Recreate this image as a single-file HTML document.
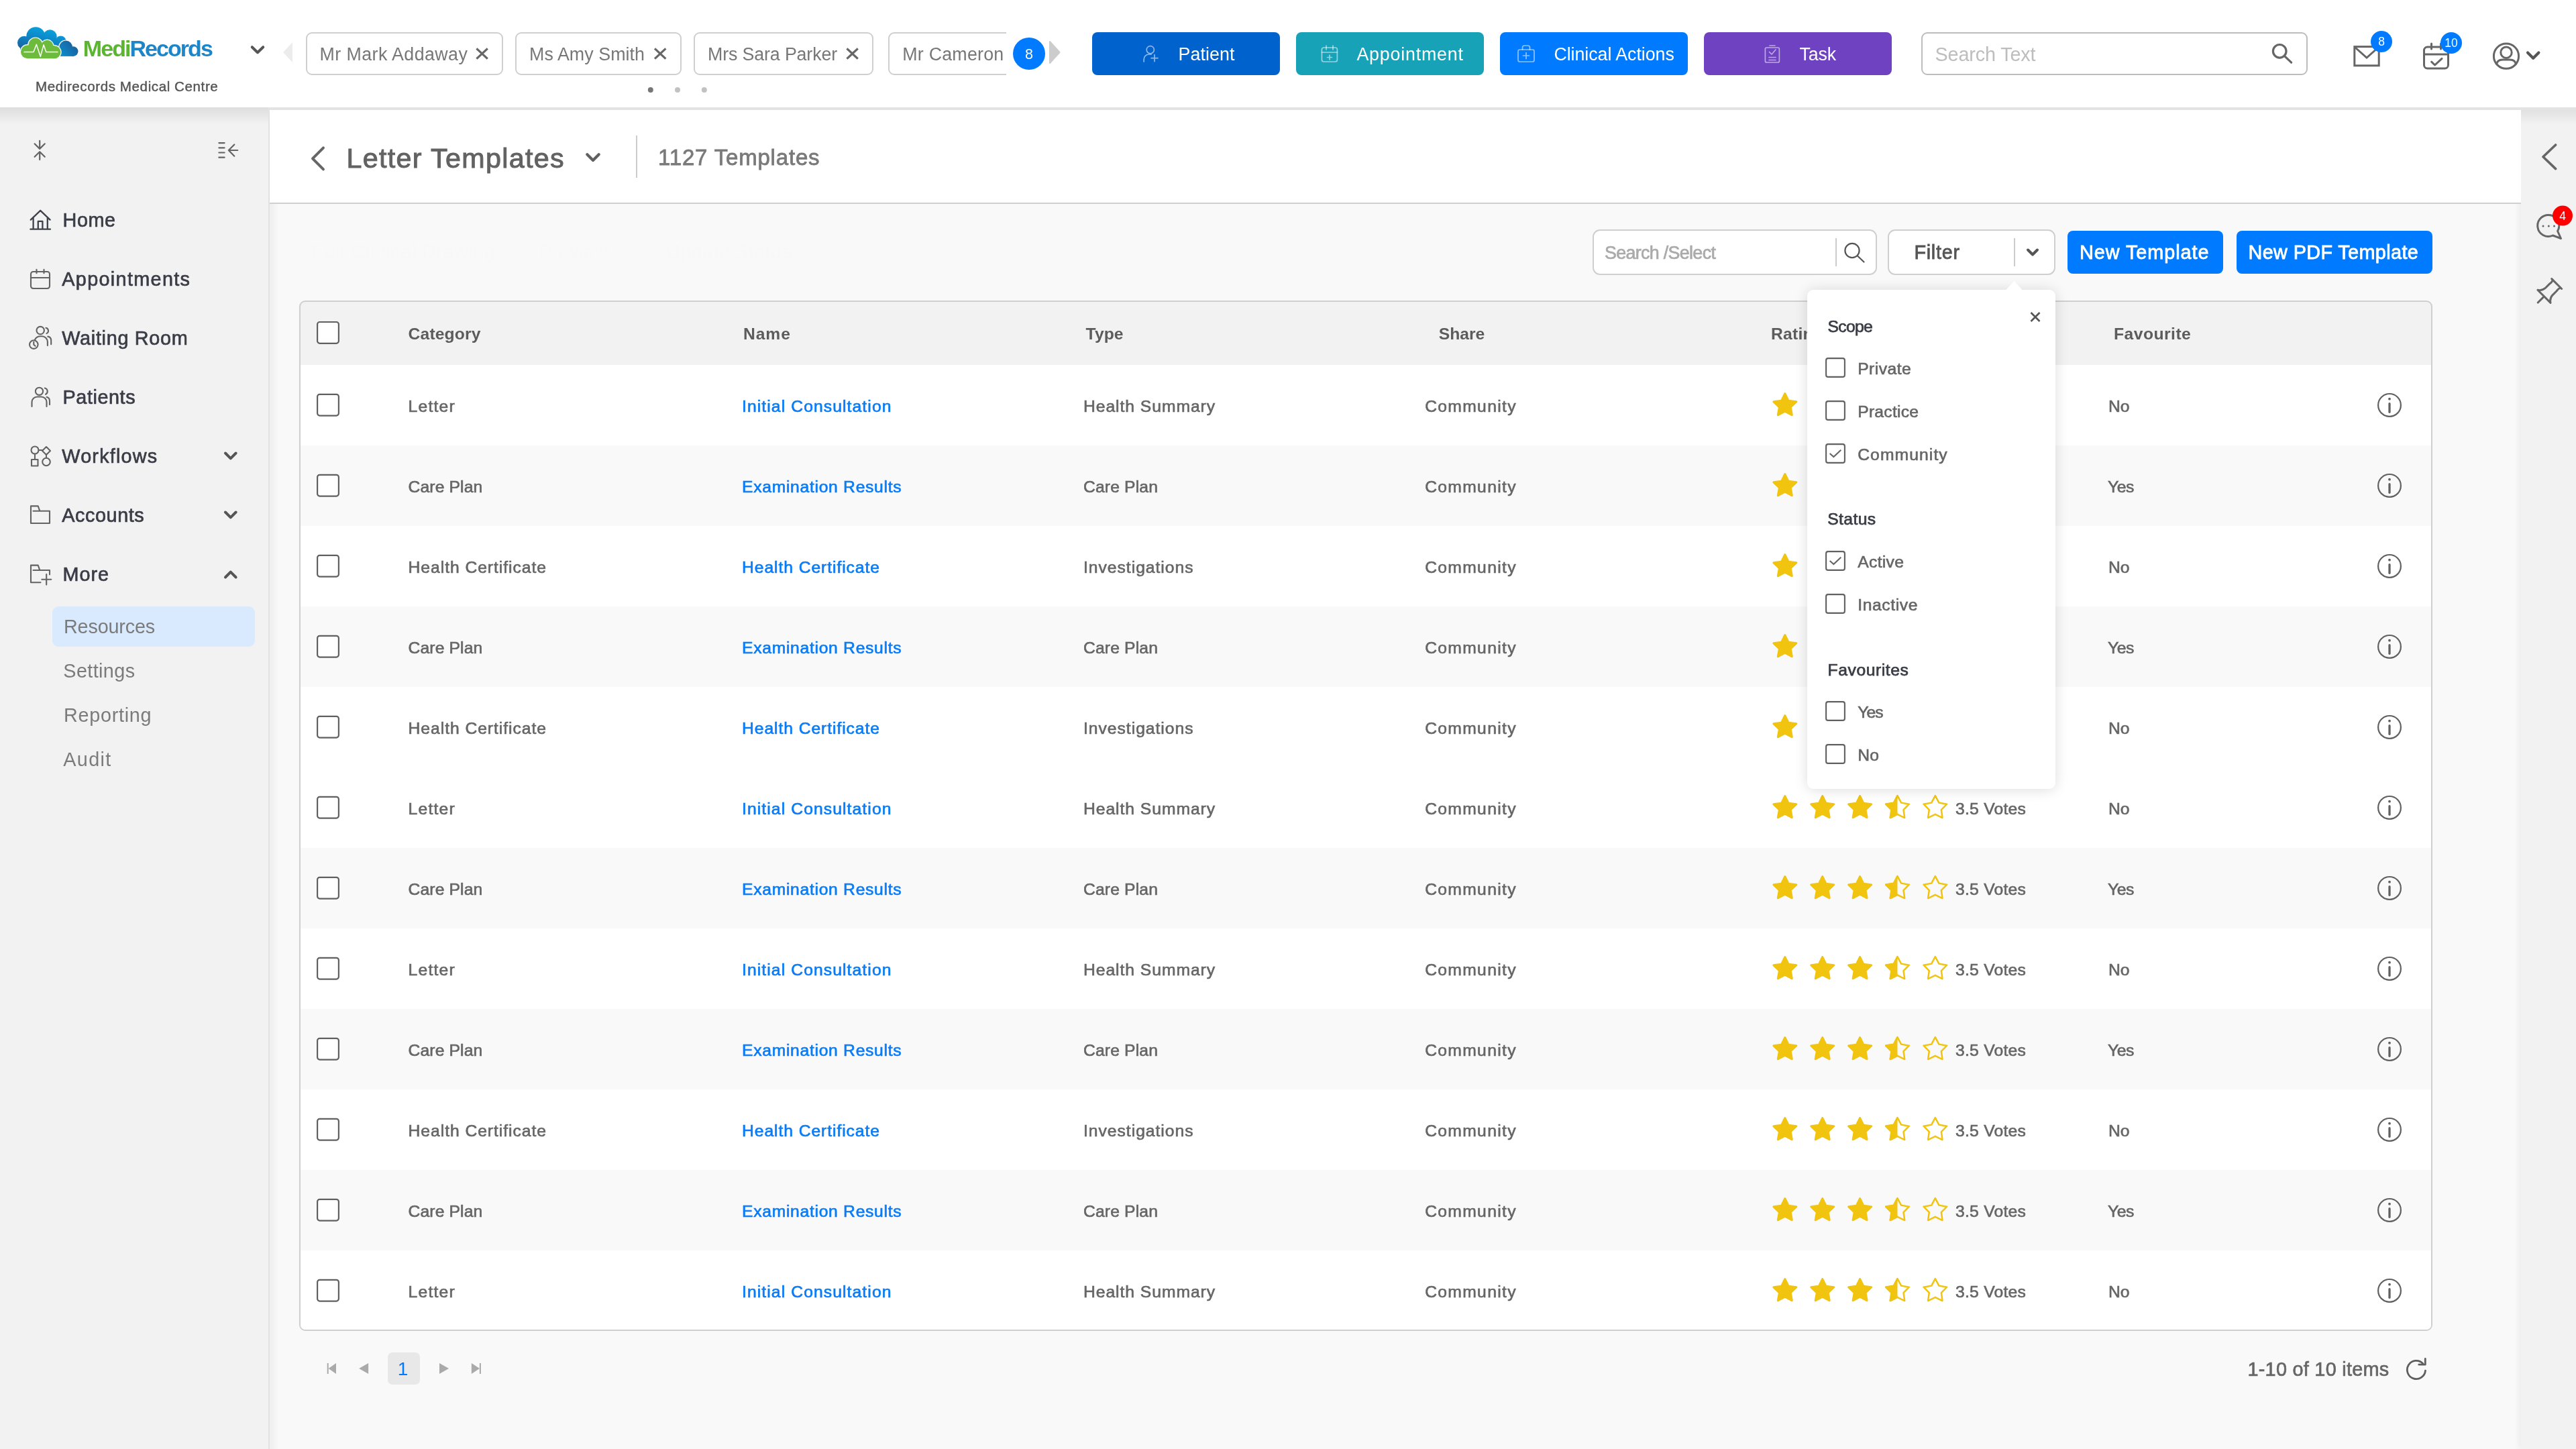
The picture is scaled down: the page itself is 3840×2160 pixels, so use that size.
<!DOCTYPE html><html lang="en"><head><meta charset="utf-8"><title>Letter Templates</title><style>
html,body{margin:0;padding:0}
body{width:3840px;height:2160px;position:relative;overflow:hidden;background:#f9f9f9;font-family:"Liberation Sans",sans-serif}
.a{position:absolute}
.t{position:absolute;white-space:nowrap;line-height:1}
svg.l{position:absolute;left:0;top:0;overflow:visible}
.tl{position:absolute;left:0;top:0;width:3840px;height:2160px;will-change:transform}
.tab{position:absolute;top:48px;height:60px;border:2px solid #cfcfcf;border-radius:9px;background:#fff}
.btn{position:absolute;top:48px;height:64px;width:280px;border-radius:8px}
.row{position:absolute;left:0;width:3176px;height:120px}
</style></head><body>
<div class="a" style="left:0;top:160px;width:400px;height:2000px;background:#f2f2f2"></div>
<div class="a" style="left:400px;top:160px;width:2px;height:2000px;background:#e2e2e2"></div>
<div class="a" style="left:402px;top:160px;width:14px;height:2000px;background:linear-gradient(90deg,rgba(0,0,0,0.045),rgba(0,0,0,0))"></div>
<div class="a" style="left:78px;top:904px;width:302px;height:60px;border-radius:9px;background:#d9eaff"></div>
<div class="a" style="left:3758px;top:160px;width:82px;height:2000px;background:#f2f2f2;box-shadow:-3px 0 8px rgba(0,0,0,0.06)"></div>
<div class="a" style="left:402px;top:164px;width:3356px;height:138px;background:#fff;border-bottom:2px solid #d0d0d0"></div>
<div class="a" style="left:948px;top:202px;width:2px;height:63px;background:#ccc"></div>
<div class="a" style="left:0;top:0;width:3840px;height:160px;background:#fff;box-shadow:0 0 0 0 #000"></div>
<div class="a" style="left:0;top:160px;width:400px;height:26px;background:linear-gradient(180deg,rgba(0,0,0,0.085),rgba(0,0,0,0))"></div>
<div class="a" style="left:400px;top:160px;width:3440px;height:4px;background:#e3e3e3"></div>
<div class="a" style="left:3758px;top:164px;width:82px;height:22px;background:linear-gradient(180deg,rgba(0,0,0,0.07),rgba(0,0,0,0))"></div>
<div class="tab" style="left:456px;width:290px"></div>
<div class="tab" style="left:768px;width:244px"></div>
<div class="tab" style="left:1034px;width:264px"></div>
<div class="a" style="left:1324px;top:48px;width:176px;height:64px;overflow:hidden"><div class="tab" style="left:0;top:0;width:300px"></div></div>
<div class="btn" style="left:1628px;background:#0062cc"></div>
<div class="btn" style="left:1932px;background:#17a2b8"></div>
<div class="btn" style="left:2236px;background:#007bff"></div>
<div class="btn" style="left:2540px;background:#6f42c1"></div>
<div class="a" style="left:2864px;top:48px;width:572px;height:60px;border:2px solid #bdbdbd;border-radius:9px;background:#fff"></div>
<div class="a" style="left:2374px;top:342px;width:420px;height:64px;border:2px solid #cfcfcf;border-radius:11px;background:#fff"></div>
<div class="a" style="left:2736px;top:355px;width:2px;height:42px;background:#ccc"></div>
<div class="a" style="left:2814px;top:342px;width:246px;height:64px;border:2px solid #cfcfcf;border-radius:11px;background:#fff"></div>
<div class="a" style="left:3002px;top:355px;width:2px;height:42px;background:#ccc"></div>
<div class="a" style="left:3082px;top:344px;width:232px;height:64px;border-radius:8px;background:#007bff"></div>
<div class="a" style="left:3334px;top:344px;width:292px;height:64px;border-radius:8px;background:#007bff"></div>
<div class="a" style="left:446px;top:448px;width:3176px;height:1532px;border:2px solid #cfcfcf;border-radius:9px;background:#f2f2f2;overflow:hidden"><div class="row" style="top:94px;background:#fff"></div><div class="row" style="top:214px;background:#f9f9f9"></div><div class="row" style="top:334px;background:#fff"></div><div class="row" style="top:454px;background:#f9f9f9"></div><div class="row" style="top:574px;background:#fff"></div><div class="row" style="top:694px;background:#fff"></div><div class="row" style="top:814px;background:#f9f9f9"></div><div class="row" style="top:934px;background:#fff"></div><div class="row" style="top:1054px;background:#f9f9f9"></div><div class="row" style="top:1174px;background:#fff"></div><div class="row" style="top:1294px;background:#f9f9f9"></div><div class="row" style="top:1414px;background:#fff"></div></div>
<div class="a" style="left:578px;top:2016px;width:48px;height:48px;border-radius:7px;background:#e9e8e8"></div>
<svg class="l" width="3840" height="2160" viewBox="0 0 3840 2160"><defs><linearGradient id="lg1" gradientUnits="userSpaceOnUse" x1="56" y1="40" x2="46" y2="80"><stop offset="0" stop-color="#07a0de"/><stop offset="1" stop-color="#1a5d9c"/></linearGradient>
<linearGradient id="lg2" gradientUnits="userSpaceOnUse" x1="88" y1="84" x2="112" y2="62"><stop offset="0" stop-color="#0a93d2"/><stop offset="1" stop-color="#1c5a97"/></linearGradient></defs><g fill="url(#lg1)"><circle cx="36" cy="63.700" r="10"/><circle cx="53.300" cy="54.200" r="14"/><circle cx="74.500" cy="54.500" r="10.200"/><circle cx="90.500" cy="61.500" r="8"/><rect x="30" y="58" width="66" height="20"/></g><g fill="#fff" stroke="#fff" stroke-width="2.400"><circle cx="98.200" cy="70.400" r="9.800"/><circle cx="109.200" cy="76.600" r="7.300"/><rect x="86" y="72" width="23.500" height="11.900"/><circle cx="89" cy="77" r="6.900"/></g><g fill="url(#lg2)"><circle cx="98.200" cy="70.400" r="9.800"/><circle cx="109.200" cy="76.600" r="7.300"/><rect x="86" y="72" width="23.500" height="11.900"/><circle cx="89" cy="77" r="6.900"/></g><g fill="#fff" stroke="#fff" stroke-width="2.400"><circle cx="41" cy="77.200" r="10"/><circle cx="52.800" cy="67" r="10.400"/><circle cx="70.300" cy="69" r="9.200"/><circle cx="81" cy="77.700" r="9.500"/><rect x="41" y="68" width="40" height="19.200"/></g><g fill="#6cbb3c"><circle cx="41" cy="77.200" r="10"/><circle cx="52.800" cy="67" r="10.400"/><circle cx="70.300" cy="69" r="9.200"/><circle cx="81" cy="77.700" r="9.500"/><rect x="41" y="68" width="40" height="19.200"/></g><polyline points="35.500,77.500 50,77.500 54.300,66.300 60.300,84.200 65.100,66.800 68.700,77.500 86.500,77.500" fill="none" stroke="#fff" stroke-width="1.500" stroke-linejoin="round"/><polyline points="375.8,70.2 384,78.2 392.2,70.2" fill="none" stroke="#555" stroke-width="4" stroke-linecap="round" stroke-linejoin="round"/><polygon points="436,63 436,93 422,78" fill="#ececec"/><polygon points="1565,62 1565,94 1579.5,78" fill="#ccc" stroke="#ccc" stroke-width="2" stroke-linejoin="round"/><path d="M710.4,72.4 l16.4,15.2 M726.8,72.4 l-16.4,15.2" stroke="#666" stroke-width="3.2" fill="none"/><path d="M976,72.4 l16.4,15.2 M992.4,72.4 l-16.4,15.2" stroke="#666" stroke-width="3.2" fill="none"/><path d="M1262.4,72.4 l16.4,15.2 M1278.8000000000002,72.4 l-16.4,15.2" stroke="#666" stroke-width="3.2" fill="none"/><circle cx="969.8" cy="134" r="4" fill="#777"/><circle cx="1010" cy="134" r="4" fill="#c2c2c2"/><circle cx="1049.8" cy="134" r="4" fill="#c2c2c2"/><circle cx="1534" cy="80" r="24" fill="#007bff"/><g fill="none" stroke="#fff" stroke-opacity="0.55" stroke-width="1.700" stroke-linecap="round" stroke-linejoin="round"><circle cx="1714.8" cy="74.2" r="5.6"/><path d="M1705.2,92 v-3.5 a7.5,7.5 0 0 1 7.5,-7.5 h3.5"/><path d="M1716,86.6 h10 M1721,81.6 v10"/></g><g fill="none" stroke="#fff" stroke-opacity="0.55" stroke-width="1.700" stroke-linecap="round" stroke-linejoin="round"><rect x="1970.4" y="71" width="23" height="21" rx="3"/><path d="M1977,68 v6 M1987,68 v6 M1970.4,78 h23 M1978.5,85.5 h7 M1982,82 v7"/></g><g fill="none" stroke="#fff" stroke-opacity="0.55" stroke-width="1.700" stroke-linecap="round" stroke-linejoin="round"><rect x="2263" y="74" width="24" height="18" rx="2.5"/><path d="M2269.5,74 v-3 a3,3 0 0 1 3,-3 h5 a3,3 0 0 1 3,3 v3 M2270.5,83 h9 M2275,78.5 v9"/></g><g fill="none" stroke="#fff" stroke-opacity="0.55" stroke-width="1.700" stroke-linecap="round" stroke-linejoin="round"><rect x="2631.4" y="71" width="21" height="22" rx="2"/><path d="M2638,68 h8 M2637.5,77.5 l3.5,3.5 l6,-7 M2637,85.5 h10 M2637,89.5 h10"/></g><g fill="none" stroke="#666" stroke-width="3.2" stroke-linecap="round"><circle cx="3398.2" cy="76.3" r="9.8"/><path d="M3405.6,83.6 L3415.6,93.2"/></g><g fill="none" stroke="#666" stroke-width="3"><rect x="3509.8" y="69.6" width="36.4" height="28.2"/><path d="M3510.5,70.5 L3528,86 L3545.5,70.5"/></g><circle cx="3550" cy="62" r="16" fill="#007bff"/><g fill="none" stroke="#666" stroke-width="3" stroke-linecap="round" stroke-linejoin="round"><rect x="3613.5" y="70" width="36" height="32" rx="5"/><path d="M3624.5,65 v8 M3638.5,65 v8 M3613.5,81 h36 M3624.6,92.2 l5,4.8 l10.4,-9.6"/></g><circle cx="3654" cy="64" r="16" fill="#007bff"/><g fill="none" stroke="#666" stroke-width="3"><circle cx="3736" cy="83.7" r="18.6"/><circle cx="3736" cy="78.2" r="8.2"/><path d="M3721.5,96.5 c0.5,-5 4,-7.5 9,-7.5 h11 c5,0 8.500,2.500 9,7.5"/></g><polyline points="3768,78.6 3776.2,86.8 3784.4,78.6" fill="none" stroke="#555" stroke-width="4.2" stroke-linecap="round" stroke-linejoin="round"/><polyline points="3809.600,216 3791,233.700 3809.600,251.600" fill="none" stroke="#666" stroke-width="3.600" stroke-linecap="round" stroke-linejoin="round"/><path d="M3812.600,344.500 L3817.500,355.500 L3805.500,351 A16,16 0 1 1 3812.600,344.500 Z" fill="none" stroke="#666" stroke-width="3" stroke-linejoin="round"/><g fill="#666"><circle cx="3791" cy="337" r="1.500"/><circle cx="3799.300" cy="337" r="1.500"/><circle cx="3807.500" cy="337" r="1.500"/></g><circle cx="3820" cy="321.600" r="15" fill="#f00"/><g transform="translate(3801.650,432.650) rotate(45)" fill="none" stroke="#666" stroke-width="3" stroke-linejoin="round" stroke-linecap="round"><path d="M-10.500,-13.500 H10.500 M-8,-13 Q-6.500,-10 -7.500,-6 V3 Q-8,9.500 -13.500,13 H13.500 Q8,9.500 7.500,3 V-6 Q6.500,-10 8,-13 M0,13 V26"/></g><g fill="none" stroke="#636363" stroke-width="2.2" stroke-linecap="round" stroke-linejoin="round"><path d="M59.200,209.800 V221.500 M51.600,214.300 L59.200,221.900 L66.800,214.300 M59.200,238.100 V226.500 M51.600,233.800 L59.200,226.200 L66.800,233.800"/></g><g fill="none" stroke="#636363" stroke-width="2.2" stroke-linecap="round" stroke-linejoin="round"><path d="M326.400,213.100 h8.200 M326.400,220.300 h8.200 M326.400,227.500 h8.200 M326.400,234.700 h8.200 M341.200,224 H354.200 M349.300,215.500 L340.800,224 L349.300,232.700"/></g><g fill="none" stroke="#3f414a" stroke-width="2.300" stroke-linecap="round" stroke-linejoin="round"><path d="M45.800,327.600 L60.200,313.800 L74.600,327.600 M49.600,324.500 v17 M70.800,324.500 v17 M45.400,341.700 h29.600 M56.800,341.500 v-11.600 h6.600 v11.600"/></g><g fill="none" stroke="#636363" stroke-width="2.100" stroke-linecap="round" stroke-linejoin="round"><rect x="46" y="405" width="28" height="25" rx="3.500"/><path d="M54.500,401.800 v5.500 M65.500,401.800 v5.500 M46,414 h28"/></g><g fill="none" stroke="#636363" stroke-width="2.100" stroke-linecap="round" stroke-linejoin="round"><circle cx="60.200" cy="492.600" r="5.700"/><path d="M68.500,488.800 a4.400,4.400 0 0 1 1,8.300 M52,506.500 C53.500,503 56.500,501.200 60.500,501.200 h2 a8.400,8.400 0 0 1 8.400,8.400 v5.500 M71.300,501.600 a6,6 0 0 1 4.900,5.900 v5.800"/><circle cx="50.300" cy="513.600" r="6.300" fill="#f2f2f2"/><path d="M50.300,509.800 v4 l2.300,2"/></g><g fill="none" stroke="#636363" stroke-width="2.100" stroke-linecap="round" stroke-linejoin="round"><circle cx="58.500" cy="583.300" r="5.600"/><path d="M66.800,578.500 a5,5 0 0 1 1.300,9.300 M47.500,606 v-6.500 a8,8 0 0 1 8,-8 h6 a8,8 0 0 1 8,8 v6.500 M69.500,591.800 a6,6 0 0 1 4.500,6 v5.500"/></g><g fill="none" stroke="#636363" stroke-width="2.100" stroke-linecap="round" stroke-linejoin="round"><circle cx="52" cy="671" r="5.500"/><rect x="47" y="685" width="9.500" height="9.500"/><circle cx="69" cy="688.500" r="5.800"/><path d="M69,666 l6,6 l-6,6 l-6,-6 z M57.500,671 h5.500 M52,676.500 v8.500 M69,678 v4.700"/></g><g fill="none" stroke="#636363" stroke-width="2.100" stroke-linecap="round" stroke-linejoin="round"><path d="M46,780 v-25.600 h10.700 l2.600,7.200 M49.500,761.800 h24.500 v18.200 h-28"/></g><g fill="none" stroke="#636363" stroke-width="2.100" stroke-linecap="round" stroke-linejoin="round"><path d="M46,868.200 v-25.600 h10.700 l2.600,7.200 M49.500,850 h24.500 v6.500 M46,868.200 h14.500 M69.200,856 v15.600 M62.300,863.700 h14"/></g><polyline points="336,675.500 343.800,683.300 351.600,675.500" fill="none" stroke="#555" stroke-width="4" stroke-linecap="round" stroke-linejoin="round"/><polyline points="336,763.500 343.800,771.300 351.600,763.500" fill="none" stroke="#555" stroke-width="4" stroke-linecap="round" stroke-linejoin="round"/><polyline points="336,860.500 343.800,852.700 351.600,860.500" fill="none" stroke="#555" stroke-width="4" stroke-linecap="round" stroke-linejoin="round"/><polyline points="482,220.300 466,236.300 482,252.300" fill="none" stroke="#666" stroke-width="4" stroke-linecap="round" stroke-linejoin="round"/><polyline points="875.300,230.300 884,239 892.700,230.300" fill="none" stroke="#606060" stroke-width="4.200" stroke-linecap="round" stroke-linejoin="round"/><g fill="none" stroke="#555" stroke-width="2.200" stroke-linecap="round"><circle cx="2761" cy="373.500" r="10.600"/><path d="M2769,381.500 L2778.500,390.500"/></g><polyline points="3023,372.500 3030,379.500 3037,372.500" fill="none" stroke="#555" stroke-width="4" stroke-linecap="round" stroke-linejoin="round"/><rect x="473.1" y="480" width="31.8" height="31.8" rx="3.5" fill="#fff" stroke="#606060" stroke-width="2.2"/><defs><path id="st" d="M0.00,-17.70 L5.11,-7.04 L16.83,-5.47 L8.27,2.69 L10.40,14.32 L0.00,8.70 L-10.40,14.32 L-8.27,2.69 L-16.83,-5.47 L-5.11,-7.04 Z"/><path id="so" d="M0.00,-18.20 L5.58,-7.69 L17.31,-5.62 L9.04,2.94 L10.70,14.72 L0.00,9.50 L-10.70,14.72 L-9.04,2.94 L-17.31,-5.62 L-5.58,-7.69 Z"/><clipPath id="half"><rect x="-20" y="-20" width="20" height="40"/></clipPath></defs><rect x="473.1" y="587.8" width="31.8" height="31.8" rx="3.5" fill="#fff" stroke="#606060" stroke-width="2.2"/><use href="#st" x="2660.8" y="604.3" fill="#f1c40f" stroke="#f1c40f" stroke-width="3.200" stroke-linejoin="round"/><use href="#st" x="2716.7" y="604.3" fill="#f1c40f" stroke="#f1c40f" stroke-width="3.200" stroke-linejoin="round"/><use href="#st" x="2772.6" y="604.3" fill="#f1c40f" stroke="#f1c40f" stroke-width="3.200" stroke-linejoin="round"/><g transform="translate(2828.5,604.3)"><use href="#so" fill="none" stroke="#f1c40f" stroke-width="2.500" stroke-linejoin="round"/><g clip-path="url(#half)"><use href="#st" fill="#f1c40f" stroke="#f1c40f" stroke-width="3.200" stroke-linejoin="round"/></g></g><use href="#so" x="2884.8" y="604.3" fill="none" stroke="#f1c40f" stroke-width="2.500" stroke-linejoin="round"/><circle cx="3562" cy="603.9" r="16.900" fill="none" stroke="#616161" stroke-width="2.200"/><path d="M3562,601.7 V614.3" stroke="#616161" stroke-width="3.300" stroke-linecap="round"/><circle cx="3562" cy="594.7" r="1.900" fill="#616161"/><rect x="473.1" y="707.8" width="31.8" height="31.8" rx="3.5" fill="#fff" stroke="#606060" stroke-width="2.2"/><use href="#st" x="2660.8" y="724.3" fill="#f1c40f" stroke="#f1c40f" stroke-width="3.200" stroke-linejoin="round"/><use href="#st" x="2716.7" y="724.3" fill="#f1c40f" stroke="#f1c40f" stroke-width="3.200" stroke-linejoin="round"/><use href="#st" x="2772.6" y="724.3" fill="#f1c40f" stroke="#f1c40f" stroke-width="3.200" stroke-linejoin="round"/><g transform="translate(2828.5,724.3)"><use href="#so" fill="none" stroke="#f1c40f" stroke-width="2.500" stroke-linejoin="round"/><g clip-path="url(#half)"><use href="#st" fill="#f1c40f" stroke="#f1c40f" stroke-width="3.200" stroke-linejoin="round"/></g></g><use href="#so" x="2884.8" y="724.3" fill="none" stroke="#f1c40f" stroke-width="2.500" stroke-linejoin="round"/><circle cx="3562" cy="723.9" r="16.900" fill="none" stroke="#616161" stroke-width="2.200"/><path d="M3562,721.7 V734.3" stroke="#616161" stroke-width="3.300" stroke-linecap="round"/><circle cx="3562" cy="714.7" r="1.900" fill="#616161"/><rect x="473.1" y="827.8" width="31.8" height="31.8" rx="3.5" fill="#fff" stroke="#606060" stroke-width="2.2"/><use href="#st" x="2660.8" y="844.3" fill="#f1c40f" stroke="#f1c40f" stroke-width="3.200" stroke-linejoin="round"/><use href="#st" x="2716.7" y="844.3" fill="#f1c40f" stroke="#f1c40f" stroke-width="3.200" stroke-linejoin="round"/><use href="#st" x="2772.6" y="844.3" fill="#f1c40f" stroke="#f1c40f" stroke-width="3.200" stroke-linejoin="round"/><g transform="translate(2828.5,844.3)"><use href="#so" fill="none" stroke="#f1c40f" stroke-width="2.500" stroke-linejoin="round"/><g clip-path="url(#half)"><use href="#st" fill="#f1c40f" stroke="#f1c40f" stroke-width="3.200" stroke-linejoin="round"/></g></g><use href="#so" x="2884.8" y="844.3" fill="none" stroke="#f1c40f" stroke-width="2.500" stroke-linejoin="round"/><circle cx="3562" cy="843.9" r="16.900" fill="none" stroke="#616161" stroke-width="2.200"/><path d="M3562,841.7 V854.3" stroke="#616161" stroke-width="3.300" stroke-linecap="round"/><circle cx="3562" cy="834.7" r="1.900" fill="#616161"/><rect x="473.1" y="947.8" width="31.8" height="31.8" rx="3.5" fill="#fff" stroke="#606060" stroke-width="2.2"/><use href="#st" x="2660.8" y="964.3" fill="#f1c40f" stroke="#f1c40f" stroke-width="3.200" stroke-linejoin="round"/><use href="#st" x="2716.7" y="964.3" fill="#f1c40f" stroke="#f1c40f" stroke-width="3.200" stroke-linejoin="round"/><use href="#st" x="2772.6" y="964.3" fill="#f1c40f" stroke="#f1c40f" stroke-width="3.200" stroke-linejoin="round"/><g transform="translate(2828.5,964.3)"><use href="#so" fill="none" stroke="#f1c40f" stroke-width="2.500" stroke-linejoin="round"/><g clip-path="url(#half)"><use href="#st" fill="#f1c40f" stroke="#f1c40f" stroke-width="3.200" stroke-linejoin="round"/></g></g><use href="#so" x="2884.8" y="964.3" fill="none" stroke="#f1c40f" stroke-width="2.500" stroke-linejoin="round"/><circle cx="3562" cy="963.9" r="16.900" fill="none" stroke="#616161" stroke-width="2.200"/><path d="M3562,961.7 V974.3" stroke="#616161" stroke-width="3.300" stroke-linecap="round"/><circle cx="3562" cy="954.7" r="1.900" fill="#616161"/><rect x="473.1" y="1067.8" width="31.8" height="31.8" rx="3.5" fill="#fff" stroke="#606060" stroke-width="2.2"/><use href="#st" x="2660.8" y="1084.3" fill="#f1c40f" stroke="#f1c40f" stroke-width="3.200" stroke-linejoin="round"/><use href="#st" x="2716.7" y="1084.3" fill="#f1c40f" stroke="#f1c40f" stroke-width="3.200" stroke-linejoin="round"/><use href="#st" x="2772.6" y="1084.3" fill="#f1c40f" stroke="#f1c40f" stroke-width="3.200" stroke-linejoin="round"/><g transform="translate(2828.5,1084.3)"><use href="#so" fill="none" stroke="#f1c40f" stroke-width="2.500" stroke-linejoin="round"/><g clip-path="url(#half)"><use href="#st" fill="#f1c40f" stroke="#f1c40f" stroke-width="3.200" stroke-linejoin="round"/></g></g><use href="#so" x="2884.8" y="1084.3" fill="none" stroke="#f1c40f" stroke-width="2.500" stroke-linejoin="round"/><circle cx="3562" cy="1083.9" r="16.900" fill="none" stroke="#616161" stroke-width="2.200"/><path d="M3562,1081.7 V1094.3" stroke="#616161" stroke-width="3.300" stroke-linecap="round"/><circle cx="3562" cy="1074.7" r="1.900" fill="#616161"/><rect x="473.1" y="1187.8" width="31.8" height="31.8" rx="3.5" fill="#fff" stroke="#606060" stroke-width="2.2"/><use href="#st" x="2660.8" y="1204.3" fill="#f1c40f" stroke="#f1c40f" stroke-width="3.200" stroke-linejoin="round"/><use href="#st" x="2716.7" y="1204.3" fill="#f1c40f" stroke="#f1c40f" stroke-width="3.200" stroke-linejoin="round"/><use href="#st" x="2772.6" y="1204.3" fill="#f1c40f" stroke="#f1c40f" stroke-width="3.200" stroke-linejoin="round"/><g transform="translate(2828.5,1204.3)"><use href="#so" fill="none" stroke="#f1c40f" stroke-width="2.500" stroke-linejoin="round"/><g clip-path="url(#half)"><use href="#st" fill="#f1c40f" stroke="#f1c40f" stroke-width="3.200" stroke-linejoin="round"/></g></g><use href="#so" x="2884.8" y="1204.3" fill="none" stroke="#f1c40f" stroke-width="2.500" stroke-linejoin="round"/><circle cx="3562" cy="1203.9" r="16.900" fill="none" stroke="#616161" stroke-width="2.200"/><path d="M3562,1201.7 V1214.3" stroke="#616161" stroke-width="3.300" stroke-linecap="round"/><circle cx="3562" cy="1194.7" r="1.900" fill="#616161"/><rect x="473.1" y="1307.8" width="31.8" height="31.8" rx="3.5" fill="#fff" stroke="#606060" stroke-width="2.2"/><use href="#st" x="2660.8" y="1324.3" fill="#f1c40f" stroke="#f1c40f" stroke-width="3.200" stroke-linejoin="round"/><use href="#st" x="2716.7" y="1324.3" fill="#f1c40f" stroke="#f1c40f" stroke-width="3.200" stroke-linejoin="round"/><use href="#st" x="2772.6" y="1324.3" fill="#f1c40f" stroke="#f1c40f" stroke-width="3.200" stroke-linejoin="round"/><g transform="translate(2828.5,1324.3)"><use href="#so" fill="none" stroke="#f1c40f" stroke-width="2.500" stroke-linejoin="round"/><g clip-path="url(#half)"><use href="#st" fill="#f1c40f" stroke="#f1c40f" stroke-width="3.200" stroke-linejoin="round"/></g></g><use href="#so" x="2884.8" y="1324.3" fill="none" stroke="#f1c40f" stroke-width="2.500" stroke-linejoin="round"/><circle cx="3562" cy="1323.9" r="16.900" fill="none" stroke="#616161" stroke-width="2.200"/><path d="M3562,1321.7 V1334.3" stroke="#616161" stroke-width="3.300" stroke-linecap="round"/><circle cx="3562" cy="1314.7" r="1.900" fill="#616161"/><rect x="473.1" y="1427.8" width="31.8" height="31.8" rx="3.5" fill="#fff" stroke="#606060" stroke-width="2.2"/><use href="#st" x="2660.8" y="1444.3" fill="#f1c40f" stroke="#f1c40f" stroke-width="3.200" stroke-linejoin="round"/><use href="#st" x="2716.7" y="1444.3" fill="#f1c40f" stroke="#f1c40f" stroke-width="3.200" stroke-linejoin="round"/><use href="#st" x="2772.6" y="1444.3" fill="#f1c40f" stroke="#f1c40f" stroke-width="3.200" stroke-linejoin="round"/><g transform="translate(2828.5,1444.3)"><use href="#so" fill="none" stroke="#f1c40f" stroke-width="2.500" stroke-linejoin="round"/><g clip-path="url(#half)"><use href="#st" fill="#f1c40f" stroke="#f1c40f" stroke-width="3.200" stroke-linejoin="round"/></g></g><use href="#so" x="2884.8" y="1444.3" fill="none" stroke="#f1c40f" stroke-width="2.500" stroke-linejoin="round"/><circle cx="3562" cy="1443.9" r="16.900" fill="none" stroke="#616161" stroke-width="2.200"/><path d="M3562,1441.7 V1454.3" stroke="#616161" stroke-width="3.300" stroke-linecap="round"/><circle cx="3562" cy="1434.7" r="1.900" fill="#616161"/><rect x="473.1" y="1547.8" width="31.8" height="31.8" rx="3.5" fill="#fff" stroke="#606060" stroke-width="2.2"/><use href="#st" x="2660.8" y="1564.3" fill="#f1c40f" stroke="#f1c40f" stroke-width="3.200" stroke-linejoin="round"/><use href="#st" x="2716.7" y="1564.3" fill="#f1c40f" stroke="#f1c40f" stroke-width="3.200" stroke-linejoin="round"/><use href="#st" x="2772.6" y="1564.3" fill="#f1c40f" stroke="#f1c40f" stroke-width="3.200" stroke-linejoin="round"/><g transform="translate(2828.5,1564.3)"><use href="#so" fill="none" stroke="#f1c40f" stroke-width="2.500" stroke-linejoin="round"/><g clip-path="url(#half)"><use href="#st" fill="#f1c40f" stroke="#f1c40f" stroke-width="3.200" stroke-linejoin="round"/></g></g><use href="#so" x="2884.8" y="1564.3" fill="none" stroke="#f1c40f" stroke-width="2.500" stroke-linejoin="round"/><circle cx="3562" cy="1563.9" r="16.900" fill="none" stroke="#616161" stroke-width="2.200"/><path d="M3562,1561.7 V1574.3" stroke="#616161" stroke-width="3.300" stroke-linecap="round"/><circle cx="3562" cy="1554.7" r="1.900" fill="#616161"/><rect x="473.1" y="1667.8" width="31.8" height="31.8" rx="3.5" fill="#fff" stroke="#606060" stroke-width="2.2"/><use href="#st" x="2660.8" y="1684.3" fill="#f1c40f" stroke="#f1c40f" stroke-width="3.200" stroke-linejoin="round"/><use href="#st" x="2716.7" y="1684.3" fill="#f1c40f" stroke="#f1c40f" stroke-width="3.200" stroke-linejoin="round"/><use href="#st" x="2772.6" y="1684.3" fill="#f1c40f" stroke="#f1c40f" stroke-width="3.200" stroke-linejoin="round"/><g transform="translate(2828.5,1684.3)"><use href="#so" fill="none" stroke="#f1c40f" stroke-width="2.500" stroke-linejoin="round"/><g clip-path="url(#half)"><use href="#st" fill="#f1c40f" stroke="#f1c40f" stroke-width="3.200" stroke-linejoin="round"/></g></g><use href="#so" x="2884.8" y="1684.3" fill="none" stroke="#f1c40f" stroke-width="2.500" stroke-linejoin="round"/><circle cx="3562" cy="1683.9" r="16.900" fill="none" stroke="#616161" stroke-width="2.200"/><path d="M3562,1681.7 V1694.3" stroke="#616161" stroke-width="3.300" stroke-linecap="round"/><circle cx="3562" cy="1674.7" r="1.900" fill="#616161"/><rect x="473.1" y="1787.8" width="31.8" height="31.8" rx="3.5" fill="#fff" stroke="#606060" stroke-width="2.2"/><use href="#st" x="2660.8" y="1804.3" fill="#f1c40f" stroke="#f1c40f" stroke-width="3.200" stroke-linejoin="round"/><use href="#st" x="2716.7" y="1804.3" fill="#f1c40f" stroke="#f1c40f" stroke-width="3.200" stroke-linejoin="round"/><use href="#st" x="2772.6" y="1804.3" fill="#f1c40f" stroke="#f1c40f" stroke-width="3.200" stroke-linejoin="round"/><g transform="translate(2828.5,1804.3)"><use href="#so" fill="none" stroke="#f1c40f" stroke-width="2.500" stroke-linejoin="round"/><g clip-path="url(#half)"><use href="#st" fill="#f1c40f" stroke="#f1c40f" stroke-width="3.200" stroke-linejoin="round"/></g></g><use href="#so" x="2884.8" y="1804.3" fill="none" stroke="#f1c40f" stroke-width="2.500" stroke-linejoin="round"/><circle cx="3562" cy="1803.9" r="16.900" fill="none" stroke="#616161" stroke-width="2.200"/><path d="M3562,1801.7 V1814.3" stroke="#616161" stroke-width="3.300" stroke-linecap="round"/><circle cx="3562" cy="1794.7" r="1.900" fill="#616161"/><rect x="473.1" y="1907.8" width="31.8" height="31.8" rx="3.5" fill="#fff" stroke="#606060" stroke-width="2.2"/><use href="#st" x="2660.8" y="1924.3" fill="#f1c40f" stroke="#f1c40f" stroke-width="3.200" stroke-linejoin="round"/><use href="#st" x="2716.7" y="1924.3" fill="#f1c40f" stroke="#f1c40f" stroke-width="3.200" stroke-linejoin="round"/><use href="#st" x="2772.6" y="1924.3" fill="#f1c40f" stroke="#f1c40f" stroke-width="3.200" stroke-linejoin="round"/><g transform="translate(2828.5,1924.3)"><use href="#so" fill="none" stroke="#f1c40f" stroke-width="2.500" stroke-linejoin="round"/><g clip-path="url(#half)"><use href="#st" fill="#f1c40f" stroke="#f1c40f" stroke-width="3.200" stroke-linejoin="round"/></g></g><use href="#so" x="2884.8" y="1924.3" fill="none" stroke="#f1c40f" stroke-width="2.500" stroke-linejoin="round"/><circle cx="3562" cy="1923.9" r="16.900" fill="none" stroke="#616161" stroke-width="2.200"/><path d="M3562,1921.7 V1934.3" stroke="#616161" stroke-width="3.300" stroke-linecap="round"/><circle cx="3562" cy="1914.7" r="1.900" fill="#616161"/><g fill="#aaa"><rect x="487.700" y="2032" width="2" height="16"/><path d="M489.700,2040 L501,2032 V2048 Z"/><path d="M535.100,2040 L549.100,2032 V2048 Z"/><path d="M669,2040 L655,2032 V2048 Z"/><path d="M715,2040 L702.800,2032 V2048 Z"/><rect x="714.900" y="2032" width="2" height="16"/></g><g fill="none" stroke="#5e5e5e" stroke-width="2.800" stroke-linecap="round" stroke-linejoin="round"><path d="M3615.500,2043.200 A13.600,13.600 0 1 1 3611.600,2032.400"/><path d="M3615.300,2025.500 V2034.200 H3605.800"/></g></svg>
<div class="tl"><span class="t" style="left:123.8px;top:55px;font-size:34.0px;color:#5cb531;font-weight:700;letter-spacing:-1.95px;">Medi<span style="color:#1d86c8">Records</span></span><span class="t" style="left:53.0px;top:119px;font-size:20.6px;color:#555;-webkit-text-stroke:0.4px #555;letter-spacing:0.57px;">Medirecords Medical Centre</span><span class="t" style="left:476.6px;top:68px;font-size:26.8px;color:#777;letter-spacing:0.41px;">Mr Mark Addaway</span><span class="t" style="left:789.0px;top:68px;font-size:26.8px;color:#777;letter-spacing:0.07px;">Ms Amy Smith</span><span class="t" style="left:1055.0px;top:68px;font-size:26.8px;color:#777;letter-spacing:-0.14px;">Mrs Sara Parker</span><span class="t" style="left:1345.3px;top:68px;font-size:26.8px;color:#777;letter-spacing:0.22px;">Mr Cameron</span><span class="t" style="left:1534.0px;top:70px;font-size:21.6px;color:#fff;transform:translateX(-50%);">8</span><span class="t" style="left:1756.5px;top:68px;font-size:26.8px;color:#fff;letter-spacing:0.09px;">Patient</span><span class="t" style="left:2022.4px;top:68px;font-size:26.8px;color:#fff;letter-spacing:0.81px;">Appointment</span><span class="t" style="left:2316.4px;top:68px;font-size:26.8px;color:#fff;letter-spacing:-0.05px;">Clinical Actions</span><span class="t" style="left:2682.6px;top:68px;font-size:26.8px;color:#fff;letter-spacing:-0.15px;">Task</span><span class="t" style="left:2884.5px;top:67px;font-size:28.8px;color:#bdbdbd;letter-spacing:-0.15px;">Search Text</span><span class="t" style="left:3550.0px;top:54px;font-size:17.5px;color:#fff;transform:translateX(-50%);">8</span><span class="t" style="left:3654.0px;top:56px;font-size:17.5px;color:#fff;transform:translateX(-50%);">10</span><span class="t" style="left:3820.0px;top:314px;font-size:17.5px;color:#fff;transform:translateX(-50%);">4</span><span class="t" style="left:516.4px;top:216px;font-size:41.2px;color:#626262;-webkit-text-stroke:1.0px #626262;letter-spacing:1.37px;">Letter Templates</span><span class="t" style="left:981.0px;top:218px;font-size:33.0px;color:#7a7a7a;-webkit-text-stroke:0.8px #7a7a7a;letter-spacing:0.82px;">1127 Templates</span><span class="t" style="left:464.0px;top:361px;font-size:28.8px;color:#f8f8f8;letter-spacing:0.48px;">Edit Clinical Drawing</span><span class="t" style="left:803.6px;top:361px;font-size:28.8px;color:#f8f8f8;letter-spacing:0.09px;">Preview</span><span class="t" style="left:993.0px;top:361px;font-size:28.8px;color:#f8f8f8;letter-spacing:0.36px;">Update Status</span><span class="t" style="left:93.6px;top:314px;font-size:28.8px;color:#3a3c46;-webkit-text-stroke:0.7px #3a3c46;letter-spacing:0.53px;">Home</span><span class="t" style="left:92.3px;top:402px;font-size:28.8px;color:#3a3c46;-webkit-text-stroke:0.7px #3a3c46;letter-spacing:1.33px;">Appointments</span><span class="t" style="left:92.3px;top:490px;font-size:28.8px;color:#3a3c46;-webkit-text-stroke:0.7px #3a3c46;letter-spacing:0.69px;">Waiting Room</span><span class="t" style="left:93.6px;top:578px;font-size:28.8px;color:#3a3c46;-webkit-text-stroke:0.7px #3a3c46;letter-spacing:0.56px;">Patients</span><span class="t" style="left:92.3px;top:666px;font-size:28.8px;color:#3a3c46;-webkit-text-stroke:0.7px #3a3c46;letter-spacing:1.19px;">Workflows</span><span class="t" style="left:92.3px;top:754px;font-size:28.8px;color:#3a3c46;-webkit-text-stroke:0.7px #3a3c46;letter-spacing:0.57px;">Accounts</span><span class="t" style="left:93.6px;top:842px;font-size:28.8px;color:#3a3c46;-webkit-text-stroke:0.7px #3a3c46;letter-spacing:0.97px;">More</span><span class="t" style="left:95.0px;top:920px;font-size:28.8px;color:#7b7b7b;letter-spacing:-0.19px;">Resources</span><span class="t" style="left:94.3px;top:986px;font-size:28.8px;color:#7b7b7b;letter-spacing:0.39px;">Settings</span><span class="t" style="left:95.0px;top:1052px;font-size:28.8px;color:#7b7b7b;letter-spacing:0.72px;">Reporting</span><span class="t" style="left:94.3px;top:1118px;font-size:28.8px;color:#7b7b7b;letter-spacing:1.32px;">Audit</span><span class="t" style="left:2392.0px;top:364px;font-size:26.8px;color:#aaa;-webkit-text-stroke:0.7px #aaa;letter-spacing:-0.65px;">Search /Select</span><span class="t" style="left:2853.4px;top:362px;font-size:28.8px;color:#555;-webkit-text-stroke:0.8px #555;letter-spacing:0.73px;">Filter</span><span class="t" style="left:3100.0px;top:362px;font-size:28.8px;color:#fff;-webkit-text-stroke:0.8px #fff;letter-spacing:0.96px;">New Template</span><span class="t" style="left:3351.5px;top:362px;font-size:28.8px;color:#fff;-webkit-text-stroke:0.8px #fff;letter-spacing:0.39px;">New PDF Template</span><span class="t" style="left:608.6px;top:486px;font-size:24.7px;color:#5c5c5c;font-weight:700;letter-spacing:0.13px;">Category</span><span class="t" style="left:1108.0px;top:486px;font-size:24.7px;color:#5c5c5c;font-weight:700;letter-spacing:0.90px;">Name</span><span class="t" style="left:1618.6px;top:486px;font-size:24.7px;color:#5c5c5c;font-weight:700;letter-spacing:0.06px;">Type</span><span class="t" style="left:2144.7px;top:486px;font-size:24.7px;color:#5c5c5c;font-weight:700;letter-spacing:-0.01px;">Share</span><span class="t" style="left:2640.0px;top:486px;font-size:24.7px;color:#5c5c5c;font-weight:700;letter-spacing:0.22px;">Rating</span><span class="t" style="left:3151.0px;top:486px;font-size:24.7px;color:#5c5c5c;font-weight:700;letter-spacing:0.46px;">Favourite</span><span class="t" style="left:608.6px;top:594px;font-size:24.7px;color:#666;-webkit-text-stroke:0.65px #666;letter-spacing:1.19px;">Letter</span><span class="t" style="left:1106.0px;top:594px;font-size:24.7px;color:#087cf8;-webkit-text-stroke:0.65px #087cf8;letter-spacing:1.09px;">Initial Consultation</span><span class="t" style="left:1615.0px;top:594px;font-size:24.7px;color:#666;-webkit-text-stroke:0.65px #666;letter-spacing:0.94px;">Health Summary</span><span class="t" style="left:2124.2px;top:594px;font-size:24.7px;color:#666;-webkit-text-stroke:0.65px #666;letter-spacing:1.31px;">Community</span><span class="t" style="left:2915.0px;top:594px;font-size:24.7px;color:#666;-webkit-text-stroke:0.65px #666;letter-spacing:0.24px;">3.5 Votes</span><span class="t" style="left:3143.0px;top:594px;font-size:24.7px;color:#666;-webkit-text-stroke:0.65px #666;letter-spacing:-0.04px;">No</span><span class="t" style="left:608.6px;top:714px;font-size:24.7px;color:#666;-webkit-text-stroke:0.65px #666;letter-spacing:0.11px;">Care Plan</span><span class="t" style="left:1106.0px;top:714px;font-size:24.7px;color:#087cf8;-webkit-text-stroke:0.65px #087cf8;letter-spacing:0.70px;">Examination Results</span><span class="t" style="left:1615.0px;top:714px;font-size:24.7px;color:#666;-webkit-text-stroke:0.65px #666;letter-spacing:0.14px;">Care Plan</span><span class="t" style="left:2124.2px;top:714px;font-size:24.7px;color:#666;-webkit-text-stroke:0.65px #666;letter-spacing:1.31px;">Community</span><span class="t" style="left:2915.0px;top:714px;font-size:24.7px;color:#666;-webkit-text-stroke:0.65px #666;letter-spacing:0.24px;">3.5 Votes</span><span class="t" style="left:3142.0px;top:714px;font-size:24.7px;color:#666;-webkit-text-stroke:0.65px #666;letter-spacing:-0.51px;">Yes</span><span class="t" style="left:608.6px;top:834px;font-size:24.7px;color:#666;-webkit-text-stroke:0.65px #666;letter-spacing:0.94px;">Health Certificate</span><span class="t" style="left:1106.0px;top:834px;font-size:24.7px;color:#087cf8;-webkit-text-stroke:0.65px #087cf8;letter-spacing:0.92px;">Health Certificate</span><span class="t" style="left:1615.0px;top:834px;font-size:24.7px;color:#666;-webkit-text-stroke:0.65px #666;letter-spacing:0.97px;">Investigations</span><span class="t" style="left:2124.2px;top:834px;font-size:24.7px;color:#666;-webkit-text-stroke:0.65px #666;letter-spacing:1.31px;">Community</span><span class="t" style="left:2915.0px;top:834px;font-size:24.7px;color:#666;-webkit-text-stroke:0.65px #666;letter-spacing:0.24px;">3.5 Votes</span><span class="t" style="left:3143.0px;top:834px;font-size:24.7px;color:#666;-webkit-text-stroke:0.65px #666;letter-spacing:-0.04px;">No</span><span class="t" style="left:608.6px;top:954px;font-size:24.7px;color:#666;-webkit-text-stroke:0.65px #666;letter-spacing:0.11px;">Care Plan</span><span class="t" style="left:1106.0px;top:954px;font-size:24.7px;color:#087cf8;-webkit-text-stroke:0.65px #087cf8;letter-spacing:0.70px;">Examination Results</span><span class="t" style="left:1615.0px;top:954px;font-size:24.7px;color:#666;-webkit-text-stroke:0.65px #666;letter-spacing:0.14px;">Care Plan</span><span class="t" style="left:2124.2px;top:954px;font-size:24.7px;color:#666;-webkit-text-stroke:0.65px #666;letter-spacing:1.31px;">Community</span><span class="t" style="left:2915.0px;top:954px;font-size:24.7px;color:#666;-webkit-text-stroke:0.65px #666;letter-spacing:0.24px;">3.5 Votes</span><span class="t" style="left:3142.0px;top:954px;font-size:24.7px;color:#666;-webkit-text-stroke:0.65px #666;letter-spacing:-0.51px;">Yes</span><span class="t" style="left:608.6px;top:1074px;font-size:24.7px;color:#666;-webkit-text-stroke:0.65px #666;letter-spacing:0.94px;">Health Certificate</span><span class="t" style="left:1106.0px;top:1074px;font-size:24.7px;color:#087cf8;-webkit-text-stroke:0.65px #087cf8;letter-spacing:0.92px;">Health Certificate</span><span class="t" style="left:1615.0px;top:1074px;font-size:24.7px;color:#666;-webkit-text-stroke:0.65px #666;letter-spacing:0.97px;">Investigations</span><span class="t" style="left:2124.2px;top:1074px;font-size:24.7px;color:#666;-webkit-text-stroke:0.65px #666;letter-spacing:1.31px;">Community</span><span class="t" style="left:2915.0px;top:1074px;font-size:24.7px;color:#666;-webkit-text-stroke:0.65px #666;letter-spacing:0.24px;">3.5 Votes</span><span class="t" style="left:3143.0px;top:1074px;font-size:24.7px;color:#666;-webkit-text-stroke:0.65px #666;letter-spacing:-0.04px;">No</span><span class="t" style="left:608.6px;top:1194px;font-size:24.7px;color:#666;-webkit-text-stroke:0.65px #666;letter-spacing:1.19px;">Letter</span><span class="t" style="left:1106.0px;top:1194px;font-size:24.7px;color:#087cf8;-webkit-text-stroke:0.65px #087cf8;letter-spacing:1.09px;">Initial Consultation</span><span class="t" style="left:1615.0px;top:1194px;font-size:24.7px;color:#666;-webkit-text-stroke:0.65px #666;letter-spacing:0.94px;">Health Summary</span><span class="t" style="left:2124.2px;top:1194px;font-size:24.7px;color:#666;-webkit-text-stroke:0.65px #666;letter-spacing:1.31px;">Community</span><span class="t" style="left:2915.0px;top:1194px;font-size:24.7px;color:#666;-webkit-text-stroke:0.65px #666;letter-spacing:0.24px;">3.5 Votes</span><span class="t" style="left:3143.0px;top:1194px;font-size:24.7px;color:#666;-webkit-text-stroke:0.65px #666;letter-spacing:-0.04px;">No</span><span class="t" style="left:608.6px;top:1314px;font-size:24.7px;color:#666;-webkit-text-stroke:0.65px #666;letter-spacing:0.11px;">Care Plan</span><span class="t" style="left:1106.0px;top:1314px;font-size:24.7px;color:#087cf8;-webkit-text-stroke:0.65px #087cf8;letter-spacing:0.70px;">Examination Results</span><span class="t" style="left:1615.0px;top:1314px;font-size:24.7px;color:#666;-webkit-text-stroke:0.65px #666;letter-spacing:0.14px;">Care Plan</span><span class="t" style="left:2124.2px;top:1314px;font-size:24.7px;color:#666;-webkit-text-stroke:0.65px #666;letter-spacing:1.31px;">Community</span><span class="t" style="left:2915.0px;top:1314px;font-size:24.7px;color:#666;-webkit-text-stroke:0.65px #666;letter-spacing:0.24px;">3.5 Votes</span><span class="t" style="left:3142.0px;top:1314px;font-size:24.7px;color:#666;-webkit-text-stroke:0.65px #666;letter-spacing:-0.51px;">Yes</span><span class="t" style="left:608.6px;top:1434px;font-size:24.7px;color:#666;-webkit-text-stroke:0.65px #666;letter-spacing:1.19px;">Letter</span><span class="t" style="left:1106.0px;top:1434px;font-size:24.7px;color:#087cf8;-webkit-text-stroke:0.65px #087cf8;letter-spacing:1.09px;">Initial Consultation</span><span class="t" style="left:1615.0px;top:1434px;font-size:24.7px;color:#666;-webkit-text-stroke:0.65px #666;letter-spacing:0.94px;">Health Summary</span><span class="t" style="left:2124.2px;top:1434px;font-size:24.7px;color:#666;-webkit-text-stroke:0.65px #666;letter-spacing:1.31px;">Community</span><span class="t" style="left:2915.0px;top:1434px;font-size:24.7px;color:#666;-webkit-text-stroke:0.65px #666;letter-spacing:0.24px;">3.5 Votes</span><span class="t" style="left:3143.0px;top:1434px;font-size:24.7px;color:#666;-webkit-text-stroke:0.65px #666;letter-spacing:-0.04px;">No</span><span class="t" style="left:608.6px;top:1554px;font-size:24.7px;color:#666;-webkit-text-stroke:0.65px #666;letter-spacing:0.11px;">Care Plan</span><span class="t" style="left:1106.0px;top:1554px;font-size:24.7px;color:#087cf8;-webkit-text-stroke:0.65px #087cf8;letter-spacing:0.70px;">Examination Results</span><span class="t" style="left:1615.0px;top:1554px;font-size:24.7px;color:#666;-webkit-text-stroke:0.65px #666;letter-spacing:0.14px;">Care Plan</span><span class="t" style="left:2124.2px;top:1554px;font-size:24.7px;color:#666;-webkit-text-stroke:0.65px #666;letter-spacing:1.31px;">Community</span><span class="t" style="left:2915.0px;top:1554px;font-size:24.7px;color:#666;-webkit-text-stroke:0.65px #666;letter-spacing:0.24px;">3.5 Votes</span><span class="t" style="left:3142.0px;top:1554px;font-size:24.7px;color:#666;-webkit-text-stroke:0.65px #666;letter-spacing:-0.51px;">Yes</span><span class="t" style="left:608.6px;top:1674px;font-size:24.7px;color:#666;-webkit-text-stroke:0.65px #666;letter-spacing:0.94px;">Health Certificate</span><span class="t" style="left:1106.0px;top:1674px;font-size:24.7px;color:#087cf8;-webkit-text-stroke:0.65px #087cf8;letter-spacing:0.92px;">Health Certificate</span><span class="t" style="left:1615.0px;top:1674px;font-size:24.7px;color:#666;-webkit-text-stroke:0.65px #666;letter-spacing:0.97px;">Investigations</span><span class="t" style="left:2124.2px;top:1674px;font-size:24.7px;color:#666;-webkit-text-stroke:0.65px #666;letter-spacing:1.31px;">Community</span><span class="t" style="left:2915.0px;top:1674px;font-size:24.7px;color:#666;-webkit-text-stroke:0.65px #666;letter-spacing:0.24px;">3.5 Votes</span><span class="t" style="left:3143.0px;top:1674px;font-size:24.7px;color:#666;-webkit-text-stroke:0.65px #666;letter-spacing:-0.04px;">No</span><span class="t" style="left:608.6px;top:1794px;font-size:24.7px;color:#666;-webkit-text-stroke:0.65px #666;letter-spacing:0.11px;">Care Plan</span><span class="t" style="left:1106.0px;top:1794px;font-size:24.7px;color:#087cf8;-webkit-text-stroke:0.65px #087cf8;letter-spacing:0.70px;">Examination Results</span><span class="t" style="left:1615.0px;top:1794px;font-size:24.7px;color:#666;-webkit-text-stroke:0.65px #666;letter-spacing:0.14px;">Care Plan</span><span class="t" style="left:2124.2px;top:1794px;font-size:24.7px;color:#666;-webkit-text-stroke:0.65px #666;letter-spacing:1.31px;">Community</span><span class="t" style="left:2915.0px;top:1794px;font-size:24.7px;color:#666;-webkit-text-stroke:0.65px #666;letter-spacing:0.24px;">3.5 Votes</span><span class="t" style="left:3142.0px;top:1794px;font-size:24.7px;color:#666;-webkit-text-stroke:0.65px #666;letter-spacing:-0.51px;">Yes</span><span class="t" style="left:608.6px;top:1914px;font-size:24.7px;color:#666;-webkit-text-stroke:0.65px #666;letter-spacing:1.19px;">Letter</span><span class="t" style="left:1106.0px;top:1914px;font-size:24.7px;color:#087cf8;-webkit-text-stroke:0.65px #087cf8;letter-spacing:1.09px;">Initial Consultation</span><span class="t" style="left:1615.0px;top:1914px;font-size:24.7px;color:#666;-webkit-text-stroke:0.65px #666;letter-spacing:0.94px;">Health Summary</span><span class="t" style="left:2124.2px;top:1914px;font-size:24.7px;color:#666;-webkit-text-stroke:0.65px #666;letter-spacing:1.31px;">Community</span><span class="t" style="left:2915.0px;top:1914px;font-size:24.7px;color:#666;-webkit-text-stroke:0.65px #666;letter-spacing:0.24px;">3.5 Votes</span><span class="t" style="left:3143.0px;top:1914px;font-size:24.7px;color:#666;-webkit-text-stroke:0.65px #666;letter-spacing:-0.04px;">No</span><span class="t" style="left:600.5px;top:2027px;font-size:28.0px;color:#007bff;transform:translateX(-50%);">1</span><span class="t" style="left:3350.4px;top:2027px;font-size:28.8px;color:#666;-webkit-text-stroke:0.7px #666;letter-spacing:0.29px;">1-10 of 10 items</span></div>
<div class="a" style="left:2694px;top:432px;width:370px;height:744px;border-radius:9px;background:#fff;box-shadow:0 1px 20px rgba(0,0,0,0.14)"></div>
<svg class="l" width="3840" height="2160" viewBox="0 0 3840 2160"><polygon points="2990,432.500 3002.400,419 3014.800,432.500" fill="#fff"/><rect x="2722.1" y="534.1" width="27.8" height="27.8" rx="3" fill="#fff" stroke="#606060" stroke-width="2.1"/><rect x="2722.1" y="598.1" width="27.8" height="27.8" rx="3" fill="#fff" stroke="#606060" stroke-width="2.1"/><rect x="2722.1" y="662.1" width="27.8" height="27.8" rx="3" fill="#fff" stroke="#606060" stroke-width="2.1"/><rect x="2722.1" y="822.1" width="27.8" height="27.8" rx="3" fill="#fff" stroke="#606060" stroke-width="2.1"/><rect x="2722.1" y="886.1" width="27.8" height="27.8" rx="3" fill="#fff" stroke="#606060" stroke-width="2.1"/><rect x="2722.1" y="1046.1" width="27.8" height="27.8" rx="3" fill="#fff" stroke="#606060" stroke-width="2.1"/><rect x="2722.1" y="1110.1" width="27.8" height="27.8" rx="3" fill="#fff" stroke="#606060" stroke-width="2.1"/><polyline points="2727.700,676 2733.400,681 2744.300,670.8" fill="none" stroke="#666" stroke-width="2.200"/><polyline points="2727.700,836 2733.400,841 2744.300,830.8" fill="none" stroke="#666" stroke-width="2.200"/><path d="M3027.500,466 l13,13 M3040.500,466 l-13,13" stroke="#555" stroke-width="2.600" fill="none"/></svg>
<div class="tl"><span class="t" style="left:2724.5px;top:475px;font-size:24.7px;color:#3a3c46;-webkit-text-stroke:0.75px #3a3c46;letter-spacing:-0.67px;">Scope</span><span class="t" style="left:2724.3px;top:762px;font-size:24.7px;color:#3a3c46;-webkit-text-stroke:0.75px #3a3c46;letter-spacing:0.36px;">Status</span><span class="t" style="left:2724.6px;top:987px;font-size:24.7px;color:#3a3c46;-webkit-text-stroke:0.75px #3a3c46;letter-spacing:0.55px;">Favourites</span><span class="t" style="left:2769.2px;top:538px;font-size:24.7px;color:#666;-webkit-text-stroke:0.65px #666;letter-spacing:0.44px;">Private</span><span class="t" style="left:2769.2px;top:602px;font-size:24.7px;color:#666;-webkit-text-stroke:0.65px #666;letter-spacing:0.24px;">Practice</span><span class="t" style="left:2769.2px;top:666px;font-size:24.7px;color:#666;-webkit-text-stroke:0.65px #666;letter-spacing:1.08px;">Community</span><span class="t" style="left:2769.2px;top:826px;font-size:24.7px;color:#666;-webkit-text-stroke:0.65px #666;letter-spacing:0.32px;">Active</span><span class="t" style="left:2769.2px;top:890px;font-size:24.7px;color:#666;-webkit-text-stroke:0.65px #666;letter-spacing:0.59px;">Inactive</span><span class="t" style="left:2769.2px;top:1050px;font-size:24.7px;color:#666;-webkit-text-stroke:0.65px #666;letter-spacing:-0.91px;">Yes</span><span class="t" style="left:2769.2px;top:1114px;font-size:24.7px;color:#666;-webkit-text-stroke:0.65px #666;letter-spacing:0.29px;">No</span></div>
</body></html>
